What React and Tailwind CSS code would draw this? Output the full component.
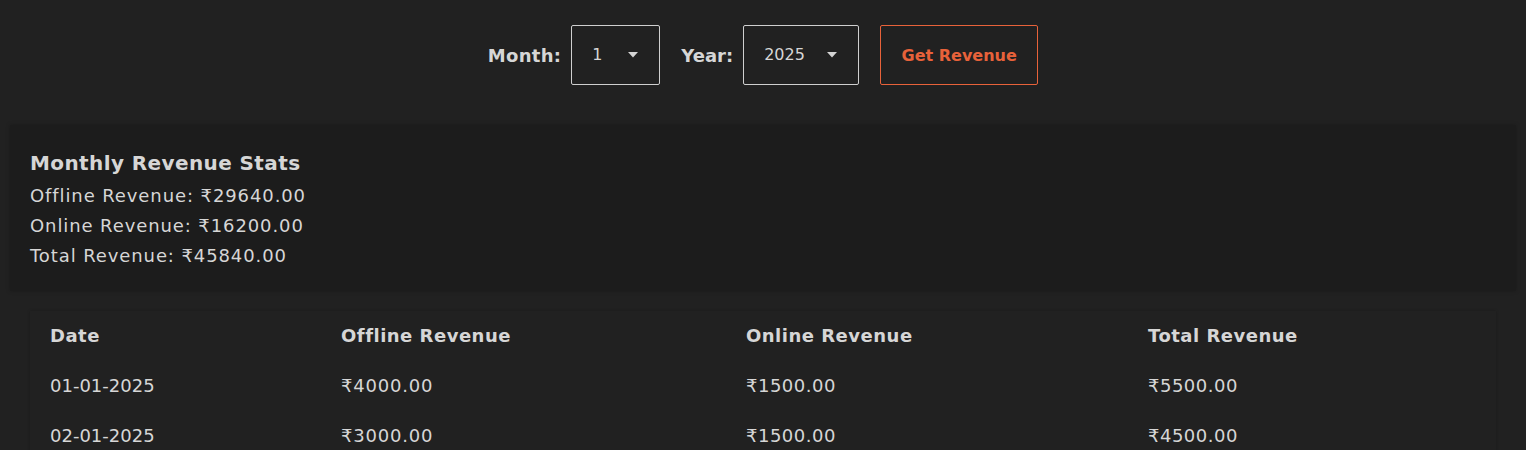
import { useState } from 'react';

const rows = [
    { date: '01-01-2025', offline: '₹4000.00', online: '₹1500.00', total: '₹5500.00' },
    { date: '02-01-2025', offline: '₹3000.00', online: '₹1500.00', total: '₹4500.00' },
];

function Caret() {
    return (
        <svg width="10" height="6" viewBox="0 0 10 6" className="shrink-0">
            <path d="M0 0 L10 0 L5 5.5 Z" fill="#d4d4d4" />
        </svg>
    );
}

function FakeSelect({ value, width }) {
    return (
        <div className={`flex h-[60px] items-center justify-between rounded-[2px] border border-[#cfcfcf] pl-5 pr-[21px] text-base text-[#d6d6d6] ${width}`}>
            <span>{value}</span>
            <Caret />
        </div>
    );
}

export default function App() {
    const [month] = useState('1');
    const [year] = useState('2025');

    return (
        <div className="min-h-screen bg-[#212121] px-[10px] pt-[25px] text-[#d6d6d6]" style={{ fontFamily: '"DejaVu Sans", "Noto Sans", sans-serif' }}>
            <div className="flex items-center justify-center">
                <label className="mr-[10px] pt-[2px] text-lg font-bold tracking-[0.3px]">Month:</label>
                <FakeSelect value={month} width="w-[89px]" />
                <label className="ml-[21px] mr-[10px] pt-[2px] text-lg font-bold">Year:</label>
                <FakeSelect value={year} width="w-[116px]" />
                <button className="ml-[21px] h-[60px] w-[158px] rounded-[2px] border border-[#e8623a] pt-[2px] text-base font-bold text-[#e8623a]">
                    Get Revenue
                </button>
            </div>

            <div className="mt-[40px] bg-[#1c1c1c] px-5 pt-[23px] pb-[20px] shadow-[0_0_4px_rgba(0,0,0,0.25)]">
                <h3 className="mb-[3px] text-xl leading-[30px] font-bold tracking-[0.4px]">Monthly Revenue Stats</h3>
                <p className="text-lg leading-[30px] tracking-[0.9px]">Offline Revenue: ₹29640.00</p>
                <p className="text-lg leading-[30px] tracking-[0.9px]">Online Revenue: ₹16200.00</p>
                <p className="text-lg leading-[30px] tracking-[0.9px]">Total Revenue: ₹45840.00</p>
            </div>

            <div className="mx-5 mt-5 bg-[#212121] shadow-[0_0_3px_rgba(0,0,0,0.2)]">
                <table className="w-full table-fixed border-collapse text-left text-lg">
                    <colgroup>
                        <col className="w-[291px]" />
                        <col className="w-[405px]" />
                        <col className="w-[402px]" />
                        <col />
                    </colgroup>
                    <thead>
                        <tr>
                            <th className="px-5 py-3 leading-[26px] font-bold tracking-[0.5px]">Date</th>
                            <th className="px-5 py-3 leading-[26px] font-bold tracking-[0.5px]">Offline Revenue</th>
                            <th className="px-5 py-3 leading-[26px] font-bold tracking-[0.5px]">Online Revenue</th>
                            <th className="px-5 py-3 leading-[26px] font-bold tracking-[0.5px]">Total Revenue</th>
                        </tr>
                    </thead>
                    <tbody>
                        {rows.map((row) => (
                            <tr key={row.date}>
                                <td className="px-5 py-3 leading-[26px]">{row.date}</td>
                                <td className="px-5 py-3 leading-[26px] tracking-[0.8px]">{row.offline}</td>
                                <td className="px-5 py-3 leading-[26px] tracking-[0.5px]">{row.online}</td>
                                <td className="px-5 py-3 leading-[26px] tracking-[0.5px]">{row.total}</td>
                            </tr>
                        ))}
                    </tbody>
                </table>
            </div>
        </div>
    );
}
